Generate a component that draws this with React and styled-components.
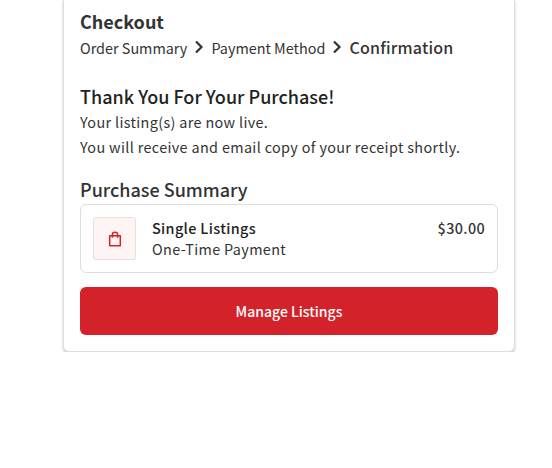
import styled, { createGlobalStyle } from "styled-components";

const GlobalStyle = createGlobalStyle`
  html, body {
    margin: 0;
    padding: 0;
    background: #fff;
    font-family: "Noto Sans CJK JP", "Noto Sans", sans-serif;
    color: #333;
  }
`;

function Chevron() {
  return (
    <ChevronIcon viewBox="0 0 10 14" aria-hidden="true">
      <path d="M2 1.5 L7.5 7 L2 12.5" fill="none" stroke="#333" strokeWidth="2.2" />
    </ChevronIcon>
  );
}

function BagIcon() {
  return (
    <svg width="16" height="16" viewBox="0 0 16 16" aria-hidden="true">
      <path
        d="M2.7 4.7 H13.3 V14.8 H2.7 Z M5.4 6.8 V3.4 C5.4 0.6 10.6 0.6 10.6 3.4 V6.8"
        fill="none"
        stroke="#d32229"
        strokeWidth="1.5"
        strokeLinejoin="round"
      />
    </svg>
  );
}

export default function App() {
  return (
    <>
      <GlobalStyle />
      <Card>
        <Title>Checkout</Title>
        <Steps>
          <Step>Order Summary</Step>
          <Chevron />
          <Step>Payment Method</Step>
          <Chevron />
          <Step $active>Confirmation</Step>
        </Steps>
        <Thanks>Thank You For Your Purchase!</Thanks>
        <Message>Your listing(s) are now live.</Message>
        <Message>You will receive and email copy of your receipt shortly.</Message>
        <SummaryHeading>Purchase Summary</SummaryHeading>
        <SummaryBox>
          <IconTile>
            <BagIcon />
          </IconTile>
          <ItemText>
            <ItemName>Single Listings</ItemName>
            <ItemNote>One-Time Payment</ItemNote>
          </ItemText>
          <Price>$30.00</Price>
        </SummaryBox>
        <ManageButton>Manage Listings</ManageButton>
      </Card>
    </>
  );
}

const Card = styled.div`
  box-sizing: border-box;
  width: 452px;
  margin-left: 63px;
  padding: 8px 16px 16px;
  background: #fff;
  border: 1px solid #dedede;
  border-top: none;
  border-radius: 0 0 6px 6px;
  box-shadow: 0 2px 3px rgba(0, 0, 0, 0.22);
`;

const Title = styled.h1`
  margin: 0;
  font-size: 18px;
  line-height: 26px;
  font-weight: 700;
  color: #333;
`;

const Steps = styled.div`
  display: flex;
  align-items: center;
  gap: 7px;
  height: 26px;
`;

const Step = styled.span`
  font-size: ${(p) => (p.$active ? "16px" : "14.4px")};
  font-weight: ${(p) => (p.$active ? 500 : 400)};
  color: #333;
  letter-spacing: ${(p) => (p.$active ? "0.2px" : "0")};
`;

const ChevronIcon = styled.svg`
  width: 10px;
  height: 14px;
  flex: none;
`;

const Thanks = styled.h2`
  margin: 23px 0 0;
  font-size: 18px;
  line-height: 26px;
  font-weight: 500;
  color: #222;
`;

const Message = styled.p`
  margin: 0;
  font-size: 14.4px;
  line-height: 25px;
  color: #333;
  letter-spacing: 0.35px;
`;

const SummaryHeading = styled.h3`
  margin: 17px 0 0;
  font-size: 18px;
  line-height: 26px;
  font-weight: 500;
  color: #333;
`;

const SummaryBox = styled.div`
  box-sizing: border-box;
  display: flex;
  align-items: flex-start;
  height: 69px;
  margin-top: 2px;
  padding: 12px 12px;
  background: #fff;
  border: 1px solid #dedede;
  border-radius: 6px;
`;

const IconTile = styled.div`
  box-sizing: border-box;
  display: flex;
  align-items: center;
  justify-content: center;
  width: 43px;
  height: 43px;
  background: #fdf4f3;
  border: 1px solid #e6e0df;
  border-radius: 3px;
  flex: none;
`;

const ItemText = styled.div`
  flex: 1;
  margin-left: 16px;
`;

const ItemName = styled.div`
  font-size: 14.4px;
  line-height: 21px;
  font-weight: 500;
  color: #222;
  letter-spacing: 0.35px;
`;

const ItemNote = styled.div`
  font-size: 14.4px;
  line-height: 21px;
  color: #333;
  letter-spacing: 0.35px;
`;

const Price = styled.div`
  font-size: 14.4px;
  line-height: 21px;
  font-weight: 500;
  color: #333;
  letter-spacing: 0.35px;
`;

const ManageButton = styled.button`
  display: block;
  width: 100%;
  height: 48px;
  margin-top: 14px;
  border: none;
  border-radius: 6px;
  background: #d32229;
  color: #fff;
  font-family: inherit;
  font-size: 14px;
  font-weight: 500;
`;
